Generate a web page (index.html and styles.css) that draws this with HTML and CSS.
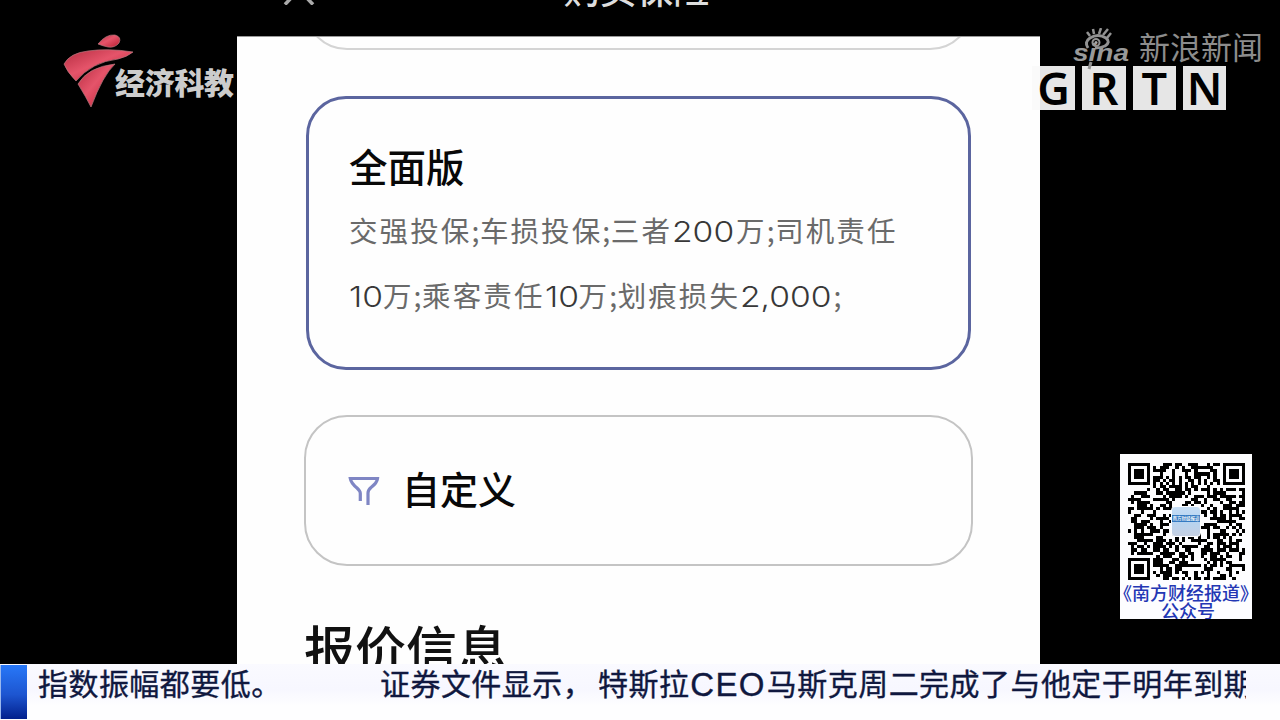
FILE: index.html
```html
<!DOCTYPE html>
<html lang="zh-CN">
<head>
    <meta charset="UTF-8">
    <meta name="viewport" content="width=device-width, initial-scale=1.0">
    <title>购买保险</title>
    <link rel="stylesheet" href="styles.css">
</head>
<body>
<div class="stage">
    <div class="phone">
        <header class="nav">
            <svg class="nav-back" width="34" height="10" viewBox="0 0 34 10"><path d="M3 9.500L11 1M31 9.500L23 1" fill="none" stroke="#aaa" stroke-width="3.500"/></svg>
            <h1>购买保险</h1>
        </header>
        <main class="plans">
            <div class="card card-prev"></div>
            <section class="card card-active">
                <h2>全面版</h2>
                <p>交强投保<i>;</i>车损投保<i>;</i>三者<span class="num n3"><b>200</b></span>万<i>;</i>司机责任</p>
                <p><span class="num n2"><b>10</b></span>万<i>;</i>乘客责任<span class="num n2"><b>10</b></span>万<i>;</i>划痕损失<span class="num n5"><b>2,000</b></span><i>;</i></p>
            </section>
            <section class="card card-custom">
                <svg width="32" height="32" viewBox="0 0 32 32">
                    <path d="M12.300 26V18.500Q12.300 16 9 13Q3 8 2.300 3.500H29.500Q29 8 23 12.500Q20 15 20 18V30" fill="none" stroke="#7f86c4" stroke-width="3.200"/>
                </svg>
                <h2>自定义</h2>
            </section>
            <h3>报价信息</h3>
        </main>
    </div>

    <footer class="ticker">
        <span class="ticker-mark"></span>
        <div class="ticker-text"><span class="first">指数振幅都要低。</span><span class="lead">证券文件显示，</span><span>特斯拉</span><em>CEO</em><span>马斯克周二完成了与他定于明年到期</span></div>
    </footer>

    <div class="channel">
        <svg width="72" height="76" viewBox="0 0 72 76">
            <defs>
                <linearGradient id="red" x1="0" y1="0" x2="1" y2="1">
                    <stop offset="0" stop-color="#b52c40"/>
                    <stop offset=".45" stop-color="#e5546a"/>
                    <stop offset="1" stop-color="#b91c30"/>
                </linearGradient>
            </defs>
            <g fill="url(#red)" stroke="#b77880" stroke-width=".7">
                <path d="M35 11Q43 1 52 2Q59 4 56 10Q52 15 45 14Q40 13 35 11Z"/>
                <path d="M1 31Q7 20 25 18Q45 15 70 19Q64 24 55 26Q29 29 13 48Q4 39 1 31Z"/>
                <path d="M52 31Q40 42 28 74Q23 64 15 51Q25 34 52 31Z"/>
            </g>
        </svg>
        <strong>经济科教</strong>
    </div>

    <div class="watermark">
        <svg width="58" height="44" viewBox="0 0 58 44">
            <g fill="none" stroke="#929292" stroke-width="2">
                <path d="M15 20Q11 14 17 10Q25 5 33 10Q38 14 32 18Q28 20 22 20" stroke-width="3"/>
                <circle cx="23" cy="14.500" r="3.500"/>
                <path d="M17 8L14 4M21 6L20 1M26 6L28 0M30 7L35 1M34 10L38 5" stroke-width="2.500"/>
                <path d="M18 34L16 41" stroke-width="3"/>
            </g>
            <circle cx="23" cy="14.500" r="1.500" fill="#aaa"/>
            <text x="0" y="33" textLength="56" lengthAdjust="spacingAndGlyphs">sina</text>
        </svg>
        <span>新浪新闻</span>
    </div>

    <div class="grtn"><span>G</span><span>R</span><span>T</span><span>N</span></div>

    <div class="qr">
        <div class="qr-code">
            <svg id="qr" width="117" height="117" viewBox="0 0 37 37" shape-rendering="crispEdges"></svg>
            <div class="qr-logo"><span>南方财经报道</span></div>
        </div>
        <p>《南方财经报道》</p>
        <p class="qr-sub">公众号</p>
    </div>
</div>
<script>
    var size = 37, seed = 20231, d = '';
    function rand() {
        seed = (seed * 16807) % 2147483647;
        return seed / 2147483647;
    }
    // finder pattern: returns null outside of the three corners
    function finder(x, y) {
        var cx = x < 8 ? 3 : x > size - 9 ? size - 4 : -1;
        var cy = y < 8 ? 3 : y > size - 9 ? size - 4 : -1;
        if (cx < 0 || cy < 0 || (cx > 3 && cy > 3)) return null;
        var r = Math.max(Math.abs(x - cx), Math.abs(y - cy));
        return r !== 2 && r < 4;
    }
    for (var y = 0; y < size; y++) {
        for (var x = 0; x < size; x++) {
            var on = rand() < 0.54, f = finder(x, y);
            if (f !== null) on = f;
            else if (x === 6 || y === 6) on = (x + y) % 2 === 0;
            if (on) d += 'M' + x + ' ' + y + 'h1v1h-1z';
        }
    }
    document.getElementById('qr').innerHTML = '<path d="' + d + '"/>';
</script>
</body>
</html>
```
FILE: styles.css
```css
* {
    box-sizing: border-box;
    margin: 0;
    padding: 0;
}
body {
    width: 1280px;
    height: 720px;
    overflow: hidden;
    background: #000;
    font-family: "Noto Sans CJK SC", sans-serif;
}
i, em {
    font-style: normal;
}
.stage {
    position: relative;
    display: flex;
    flex-direction: column;
    height: 720px;
    overflow: hidden;
}

/* phone */
.phone {
    width: 803px;
    height: 664px;
    margin-left: 236.5px;
    overflow: hidden;
}
.nav {
    display: flex;
    align-items: flex-start;
    height: 36px;
    padding-left: 45px;
    color: #ddd;
    overflow: hidden;
}
.nav-back {
    margin-top: -5px;
}
.nav h1 {
    margin: -31px 0 0 248px;
    font-size: 36.5px;
    font-weight: 500;
    line-height: 40px;
}
.plans {
    height: 628px;
    padding: 0 67px 0 67.5px;
    background: #fefefe;
    border-top: 1px solid #999;
    overflow: hidden;
}
.card {
    border: 2px solid #c4c4c4;
    border-radius: 43px;
}
.card-prev {
    height: 100px;
    margin-top: -87px;
    border-color: #d4d4d4;
}
.card-active {
    height: 274px;
    margin: 46px 2px 0 2px;
    padding: 41px 0 0 40px;
    border: 3px solid #5b659f;
    border-radius: 40px;
}
.card h2 {
    font-size: 38.5px;
    font-weight: 500;
    line-height: 50px;
    color: #080808;
}
.card-active p {
    display: flex;
    font-size: 28.5px;
    font-weight: 400;
    line-height: 64px;
    letter-spacing: 2.1px;
    white-space: nowrap;
    color: #6a6a6a;
}
.card-active h2 + p {
    margin-top: 8px;
}
.card-active p + p {
    margin-top: -1px;
}
.card-active i {
    width: 8.5px;
}
.num b {
    display: inline-block;
    font-family: Inter, sans-serif;
    font-size: 28px;
    font-weight: 300;
    letter-spacing: 0;
    color: #383838;
    transform: scaleX(1.2);
    transform-origin: left;
}
.n2 {
    width: 34px;
}
.n3 {
    width: 64px;
}
.n5 {
    width: 93.5px;
}
.card-custom {
    display: flex;
    align-items: center;
    height: 151px;
    margin-top: 45px;
    padding-left: 42px;
}
.card-custom h2 {
    margin: -5px 0 0 22px;
    font-size: 38px;
}
.plans h3 {
    margin-top: 46px;
    font-size: 51px;
    font-weight: 500;
    line-height: 70px;
    color: #111;
}

/* ticker */
.ticker {
    display: flex;
    height: 56px;
    background: linear-gradient(#fafaff, #f7f7ff 45%, #fefeff 75%);
}
.ticker-mark {
    width: 27px;
    height: 54px;
    margin-top: 1px;
    background: linear-gradient(#2878f8, #1d55d0 55%, #02208c);
    border-left: 1px solid #9ab8ee;
}
.ticker-text {
    display: flex;
    width: 1219px;
    padding-left: 11px;
    overflow: hidden;
    font-family: "Liberation Sans", "Noto Sans CJK SC", sans-serif;
    font-size: 30px;
    letter-spacing: .45px;
    line-height: 42px;
    white-space: nowrap;
    color: #10183f;
    -webkit-text-stroke: .35px #10183f;
}
.ticker-text span {
    flex: none;
}
.ticker-text .first {
    width: 342px;
}
.ticker-text .lead {
    width: 218px;
}
.ticker-text em {
    flex: none;
    width: 77.5px;
    padding-left: 1px;
    font-size: 33px;
    letter-spacing: 1.3px;
}

/* overlays of the broadcast */
.channel {
    position: absolute;
    left: 63px;
    top: 33px;
    display: flex;
}
.channel strong {
    margin: 30px 0 0 -20px;
    font-size: 30px;
    font-weight: 900;
    line-height: 36px;
    letter-spacing: -.3px;
    color: #ccc;
}
.watermark {
    position: absolute;
    left: 1073px;
    top: 28px;
    display: flex;
    font-size: 31px;
    font-weight: 400;
    line-height: 36px;
    color: #8c8c8c;
    z-index: 2;
}
.watermark text {
    font: italic bold 23px "Liberation Sans", sans-serif;
    fill: #999;
}
.watermark span {
    margin-left: 8px;
}
.grtn {
    position: absolute;
    left: 1032px;
    top: 66px;
    display: flex;
    gap: 7px;
}
.grtn span {
    width: 43.3px;
    height: 44px;
    background: #e6e6e6;
    font-family: "Noto Sans", sans-serif;
    font-size: 45px;
    font-weight: 600;
    line-height: 43px;
    text-align: center;
    color: #000;
}
.grtn span:first-child {
    background: linear-gradient(90deg, #fafafa 8px, #e6e6e6 8px);
}
.qr {
    position: absolute;
    left: 1120px;
    top: 454px;
    width: 132px;
    height: 165px;
    padding-top: 8px;
    background: #fdfdff;
    overflow: hidden;
    font-size: 18px;
    font-weight: 500;
    line-height: 18px;
    text-align: center;
    color: #2337b4;
}
.qr-code {
    display: grid;
    place-items: center;
    height: 118px;
    margin-bottom: 3px;
}
.qr-code > * {
    grid-area: 1 / 1;
}
.qr-logo {
    display: flex;
    align-items: center;
    width: 30px;
    height: 31px;
    border: 1px solid #fff;
    border-radius: 4px;
    background: linear-gradient(#c5ddf5, #b7d4f0 50%, #c5cfe2);
    overflow: hidden;
}
.qr-logo span {
    width: 100%;
    margin-top: -6px;
    background: #347ac2;
    font-size: 4.5px;
    line-height: 7px;
    color: #fff;
}
.qr p {
    display: flex;
    justify-content: center;
    white-space: nowrap;
}
.qr .qr-sub {
    padding-left: 4px;
}
```
